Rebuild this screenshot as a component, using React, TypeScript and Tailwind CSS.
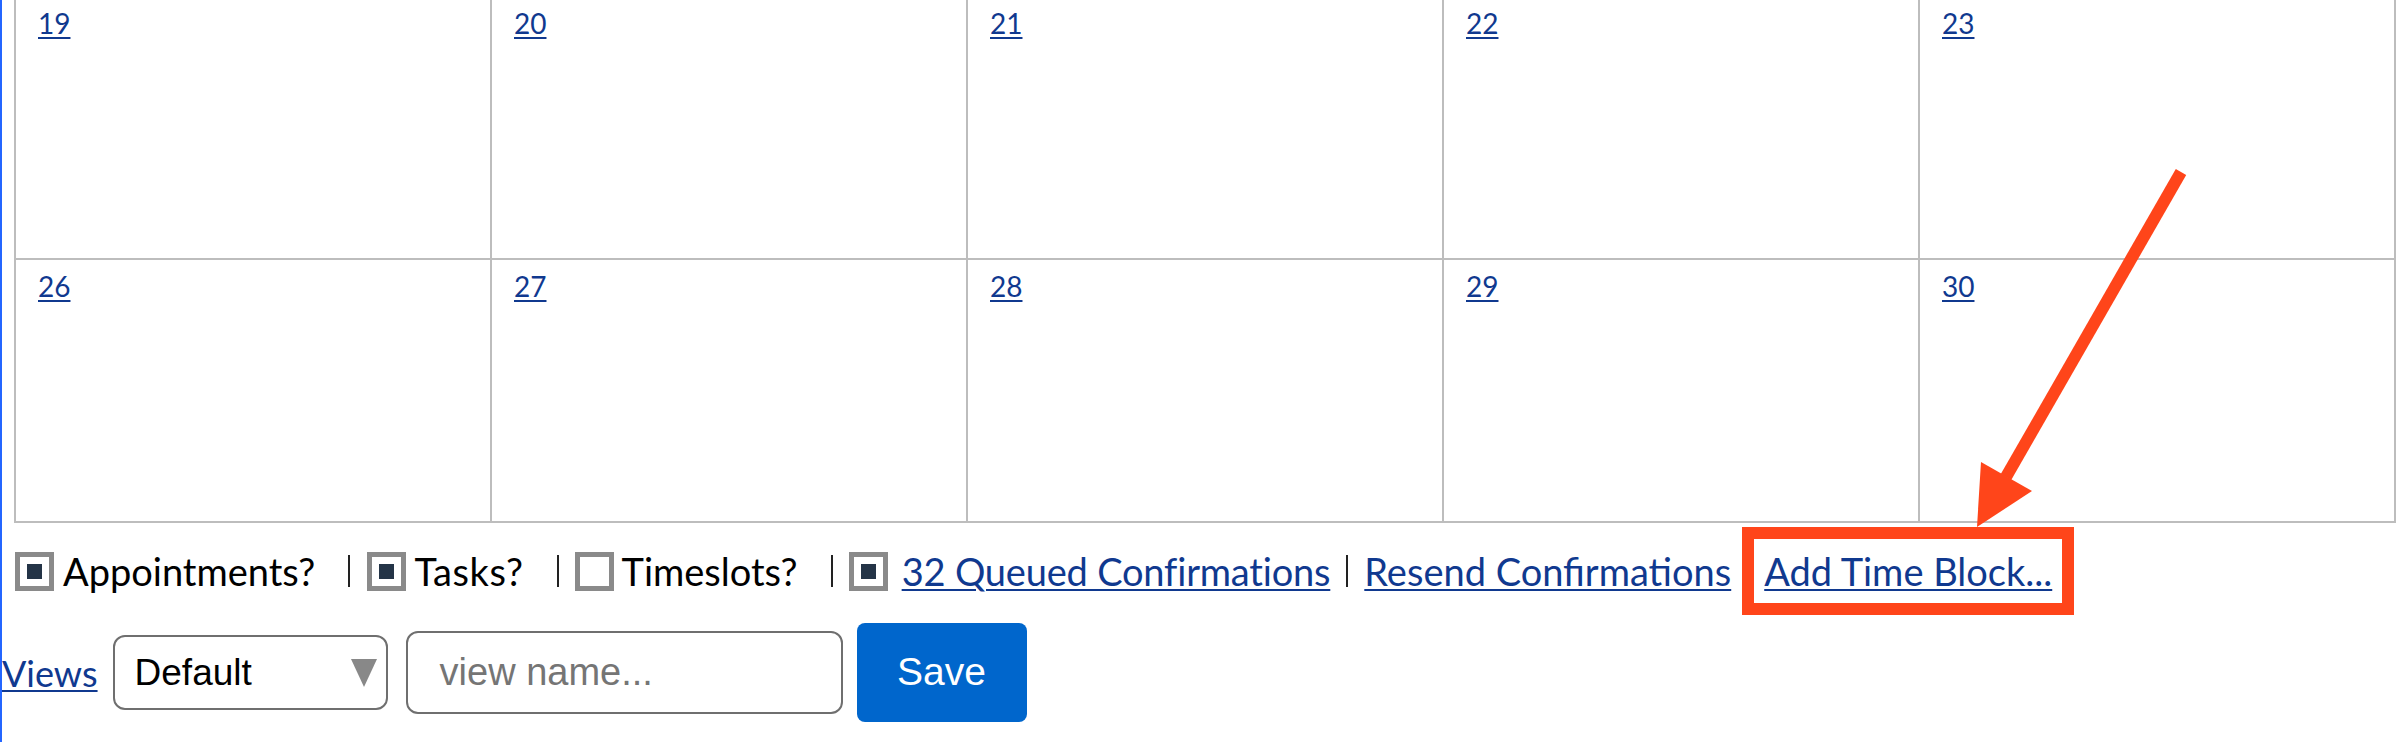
import React from "react";

const LINK = "text-[#10398f] underline decoration-[2px] underline-offset-[3px]";
const LABEL_FONT = { fontFamily: "Lato, 'Open Sans', sans-serif" };
const SANS = { fontFamily: "'Liberation Sans', Arial, sans-serif" };

function Box({ checked }: { checked: boolean }) {
  return (
    <span className="flex h-[39px] w-[39px] shrink-0 items-center justify-center border-[5px] border-[#8a8a8a] bg-white">
      {checked && <span className="block h-[15px] w-[15px] bg-[#243447]" />}
    </span>
  );
}

function Sep() {
  return <span className="block h-[32px] w-[2px] bg-[#222]" />;
}

export default function App() {
  const rows = [
    ["19", "20", "21", "22", "23"],
    ["26", "27", "28", "29", "30"],
  ];
  return (
    <div
      className="relative h-[742px] w-[2396px] overflow-hidden border-l-2 border-[#2466ff] bg-white"
      style={LABEL_FONT}
    >
      <div className="ml-[12px] mt-[-5px] grid w-[2382px] grid-cols-5 border-l-2 border-t-2 border-[#bdbdbd]">
        {rows.flat().map((d) => (
          <div
            key={d}
            className="h-[263px] border-b-2 border-r-2 border-[#bdbdbd] pl-[22px] pt-[12px]"
          >
            <a className={`${LINK} text-[28px] leading-none`}>{d}</a>
          </div>
        ))}
      </div>

      <div className="ml-[13px] mt-[4px] flex items-center text-[38px] leading-none text-black">
        <Box checked />
        <span className="ml-[9px]">Appointments?</span>
        <span className="ml-[33px]"><Sep /></span>
        <span className="ml-[17px]"><Box checked /></span>
        <span className="ml-[8px] tracking-[0.015em]">Tasks?</span>
        <span className="ml-[33px]"><Sep /></span>
        <span className="ml-[16px]"><Box checked={false} /></span>
        <span className="ml-[8px]">Timeslots?</span>
        <span className="ml-[33px]"><Sep /></span>
        <span className="ml-[16px]"><Box checked /></span>
        <a className={`ml-[14px] tracking-[-0.005em] ${LINK}`}>32 Queued Confirmations</a>
        <span className="ml-[16px]"><Sep /></span>
        <a className={`ml-[16px] ${LINK}`}>Resend Confirmations</a>
        <span className="ml-[11px] flex h-[88px] items-center border-[12px] border-[#ff451a] px-[10px]">
          <a className={LINK}>Add Time Block...</a>
        </span>
      </div>

      <div className="mt-[8px] flex items-center">
        <a className={`${LINK} text-[36px] leading-none`}>Views</a>
        <div
          className="ml-[15px] flex h-[75px] w-[275px] items-center justify-between rounded-[12px] border-2 border-[#6f6f6f] pl-[20px] pr-[9px] text-[37px] text-black"
          style={SANS}
        >
          <span>Default</span>
          <svg width="26" height="28" viewBox="0 0 26 28">
            <polygon points="0,0 26,0 13,28" fill="#888" />
          </svg>
        </div>
        <div
          className="ml-[18px] flex h-[83px] w-[437px] items-center rounded-[12px] border-2 border-[#6f6f6f] pl-[32px] text-[38px] text-[#757575]"
          style={SANS}
        >
          view name...
        </div>
        <button
          className="ml-[14px] flex h-[99px] w-[170px] items-center justify-center rounded-[8px] bg-[#0066cc] text-[39px] text-white"
          style={SANS}
        >
          Save
        </button>
      </div>

      <svg className="pointer-events-none absolute left-0 top-0" width="2396" height="742">
        <line x1="2179" y1="172" x2="2004" y2="477" stroke="#ff451a" strokeWidth="12" />
        <polygon points="1975,527 1979,462 2030,491" fill="#ff451a" />
      </svg>
    </div>
  );
}
